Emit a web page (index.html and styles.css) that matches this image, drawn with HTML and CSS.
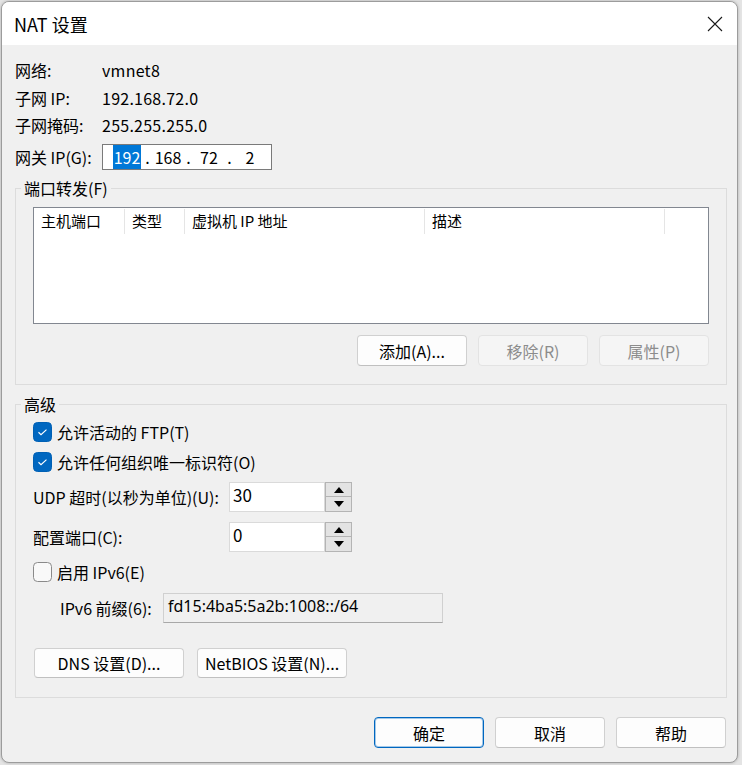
FILE: index.html
```html
<!DOCTYPE html>
<html lang="zh-CN">
<head>
<meta charset="utf-8">
<title>NAT 设置</title>
<link rel="stylesheet" href="styles.css">
</head>
<body>
<div class="dialog">
  <div class="titlebar">
    <span class="title">NAT 设置</span>
    <svg class="close" width="16" height="16" viewBox="0 0 16 16"><path d="M1 1 L15 15 M15 1 L1 15" stroke="#1a1a1a" stroke-width="1.1" fill="none"/></svg>
  </div>
  <div class="content">
    <div class="info">
      <div class="lbl">网络:</div><div class="val">vmnet8</div>
      <div class="lbl">子网 IP:</div><div class="val">192.168.72.0</div>
      <div class="lbl">子网掩码:</div><div class="val">255.255.255.0</div>
      <div class="lbl">网关 IP(G):</div>
      <div class="ipbox">
        <span class="seg"><span class="sel">192</span></span><span class="dot">.</span><span class="seg">168</span><span class="dot">.</span><span class="seg">72</span><span class="dot">.</span><span class="seg">2</span>
      </div>
    </div>

    <fieldset class="group g1">
      <legend>端口转发(F)</legend>
      <div class="list">
        <div class="list-head">
          <div class="col c1">主机端口</div>
          <div class="col c2">类型</div>
          <div class="col c3">虚拟机 IP 地址</div>
          <div class="col c4">描述</div>
          <div class="col c5"></div>
        </div>
      </div>
      <div class="btnrow">
        <div class="btn">添加(A)...</div>
        <div class="btn disabled">移除(R)</div>
        <div class="btn disabled">属性(P)</div>
      </div>
    </fieldset>

    <fieldset class="group g2">
      <legend>高级</legend>
      <div class="chkrow">
        <span class="chk on"><svg width="19" height="20" viewBox="0 0 19 20"><rect x="0.5" y="0.5" width="18" height="19" rx="4" fill="#0067c0" stroke="#0060b4"/><path d="M5.5 10.3 L8 12.6 L13.5 7.6" stroke="#fff" stroke-width="1.2" fill="none"/></svg></span>
        <span>允许活动的 FTP(T)</span>
      </div>
      <div class="chkrow">
        <span class="chk on"><svg width="19" height="20" viewBox="0 0 19 20"><rect x="0.5" y="0.5" width="18" height="19" rx="4" fill="#0067c0" stroke="#0060b4"/><path d="M5.5 10.3 L8 12.6 L13.5 7.6" stroke="#fff" stroke-width="1.2" fill="none"/></svg></span>
        <span>允许任何组织唯一标识符(O)</span>
      </div>
      <div class="spinrow">
        <span>UDP 超时(以秒为单位)(U):</span>
        <div class="spin">
          <div class="spin-input">30</div>
          <div class="spin-btns">
            <div class="sb"><svg width="10" height="6" viewBox="0 0 10 6"><path d="M0 6 L5 0 L10 6 Z" fill="#000"/></svg></div>
            <div class="sb"><svg width="10" height="6" viewBox="0 0 10 6"><path d="M0 0 L10 0 L5 6 Z" fill="#000"/></svg></div>
          </div>
        </div>
      </div>
      <div class="spinrow">
        <span>配置端口(C):</span>
        <div class="spin">
          <div class="spin-input">0</div>
          <div class="spin-btns">
            <div class="sb"><svg width="10" height="6" viewBox="0 0 10 6"><path d="M0 6 L5 0 L10 6 Z" fill="#000"/></svg></div>
            <div class="sb"><svg width="10" height="6" viewBox="0 0 10 6"><path d="M0 0 L10 0 L5 6 Z" fill="#000"/></svg></div>
          </div>
        </div>
      </div>
      <div class="chkrow">
        <span class="chk"><svg width="19" height="20" viewBox="0 0 19 20"><rect x="0.5" y="0.5" width="18" height="19" rx="4" fill="#f9f9f9" stroke="#8a8a8a"/></svg></span>
        <span>启用 IPv6(E)</span>
      </div>
      <div class="v6row">
        <span class="v6lbl">IPv6 前缀(6):</span>
        <div class="v6field">fd15:4ba5:5a2b:1008::/64</div>
      </div>
      <div class="subbtns">
        <div class="btn wide">DNS 设置(D)...</div>
        <div class="btn wide">NetBIOS 设置(N)...</div>
      </div>
    </fieldset>

    <div class="footer">
      <div class="btn primary">确定</div>
      <div class="btn">取消</div>
      <div class="btn">帮助</div>
    </div>
  </div>
</div>
</body>
</html>
```

FILE: styles.css
```css
* { box-sizing: border-box; }
html, body { margin: 0; padding: 0; }
body {
  width: 742px;
  height: 765px;
  overflow: hidden;
  background: #e4e4e4;
  font-family: "Noto Sans CJK SC", "Noto Sans", sans-serif;
  font-size: 16px;
  color: #000;
}
.dialog {
  margin: 1px 0 0 1px;
  width: 737px;
  height: 762px;
  border: 1px solid #9c9c9c;
  border-radius: 8px;
  overflow: hidden;
  background: #f0f0f0;
  box-shadow: 0 0 3px rgba(0,0,0,0.25);
}
.titlebar {
  height: 43px;
  background: #fff;
  display: flex;
  align-items: center;
  justify-content: space-between;
  padding: 0 14px 0 12px;
}
.title { font-size: 18px; line-height: 22px; }
.close { display: block; }
.content { padding: 11px 10px 0 13px; }

.info {
  display: grid;
  grid-template-columns: 87px auto;
  grid-template-rows: 28px 27px 28px 36px;
  align-items: center;
  line-height: 20px;
}
.val { letter-spacing: 0.25px; }
.ipbox {
  width: 170px;
  height: 26px;
  background: #fff;
  border: 1px solid #7a7a7a;
  display: flex;
  align-items: center;
  padding-left: 8px;
}
.seg { width: 32px; text-align: center; line-height: 20px; }
.dot { width: 9px; text-align: center; }
.sel { background: #0078d7; color: #fff; padding: 0 1px; }

.group {
  margin: 0;
  border: 1px solid #dcdcdc;
  min-width: 0;
}
.group legend {
  padding: 0 3px;
  margin-left: -12px;
  line-height: 20px;
}
.g1 { margin-top: 3px; padding: 9px 17px 18px 17px; }
.g2 { margin-top: 9px; padding: 3px 17px 19px 17px; }

.list {
  height: 117px;
  background: #fff;
  border: 1px solid #828790;
}
.list-head { display: flex; height: 26px; }
.col {
  height: 25px;
  margin-top: 1px;
  border-right: 1px solid #e5e5e5;
  padding-left: 7px;
  font-size: 15px;
  line-height: 24px;
  white-space: nowrap;
}
.c1 { width: 91px; }
.c2 { width: 60px; }
.c3 { width: 240px; }
.c4 { width: 240px; }
.c5 { flex: 1; border-right: none; }

.btnrow {
  display: flex;
  justify-content: flex-end;
  gap: 11px;
  margin-top: 11px;
}
.btn {
  width: 110px;
  height: 31px;
  background: #fdfdfd;
  border: 1px solid #d0d0d0;
  border-bottom-color: #c0c0c0;
  border-radius: 4px;
  display: flex;
  align-items: center;
  justify-content: center;
  line-height: 20px;
}
.btn.disabled {
  background: #f5f5f5;
  border-color: #e3e3e3;
  color: #8c8c8c;
}
.btn.primary {
  border: 1px solid #0067c0;
  box-shadow: inset 0 0 0 1px rgba(0,103,192,0.35);
}
.btn.wide { width: 150px; height: 30px; }

.chkrow {
  height: 30px;
  display: flex;
  align-items: center;
  gap: 5px;
}
.chk { display: flex; width: 19px; height: 20px; }
.chk svg { display: block; }

.spinrow {
  height: 40px;
  display: grid;
  grid-template-columns: 196px auto;
  align-items: center;
}
.spin { display: flex; height: 30px; }
.spin-input {
  width: 96px;
  height: 30px;
  background: #fff;
  border: 1px solid #dadada;
  padding: 1px 0 0 3px;
  line-height: 22px;
  font-size: 17px;
}
.spin-btns { width: 27px; display: flex; flex-direction: column; }
.sb {
  height: 15px;
  background: #e3e3e3;
  border: 1px solid #b4b4b4;
  display: flex;
  align-items: center;
  justify-content: center;
}
.sb + .sb { border-top: none; }

.v6row {
  height: 42px;
  display: flex;
  align-items: center;
  padding-left: 27px;
}
.v6lbl { width: 103px; }
.v6field {
  width: 280px;
  height: 30px;
  border: 1px solid #d0d0d0;
  border-bottom-color: #a8a8a8;
  background: #f0f0f0;
  padding: 1px 0 0 4px;
  line-height: 22px;
  font-size: 16px;
  font-family: "Noto Sans", sans-serif;
}
.subbtns {
  display: flex;
  gap: 13px;
  margin-top: 19px;
  margin-left: 1px;
}

.footer {
  display: flex;
  justify-content: flex-end;
  gap: 11px;
  margin-top: 19px;
  margin-right: 1px;
}
```
